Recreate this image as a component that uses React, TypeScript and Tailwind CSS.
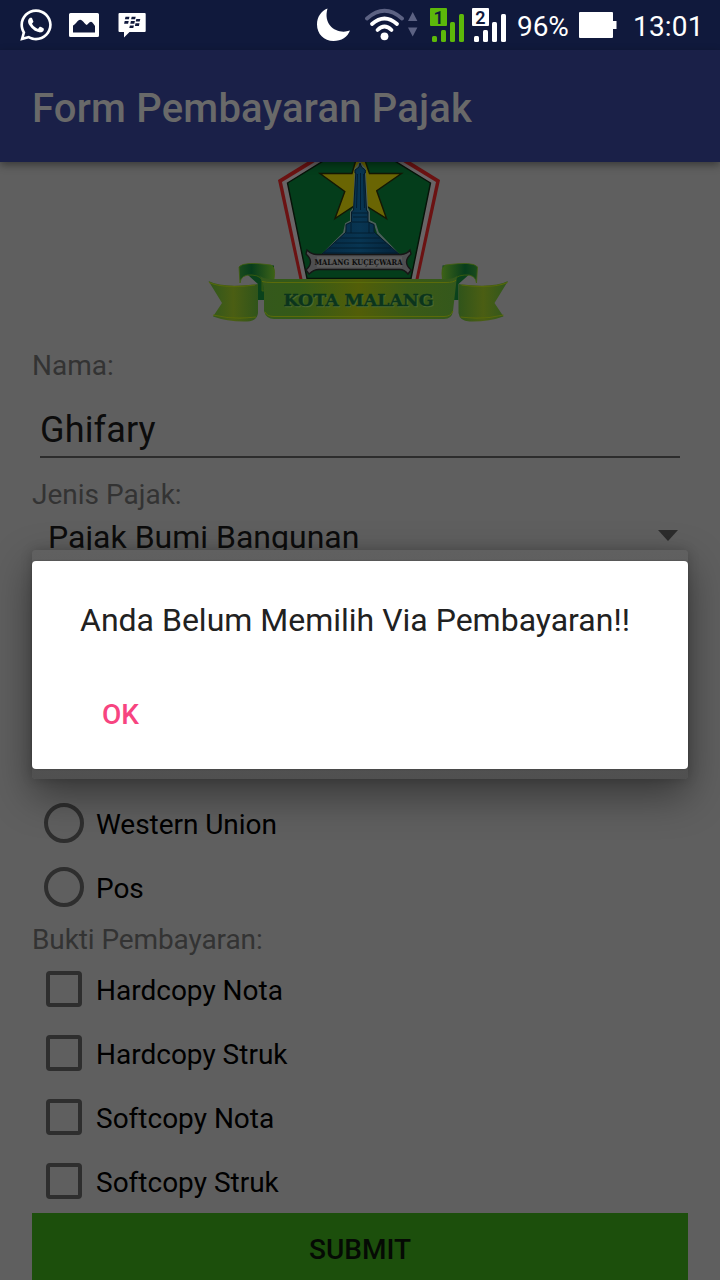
import React from "react";
import { FaWhatsapp } from "react-icons/fa";

function StatusBar() {
  return (
    <div className="flex h-[50px] shrink-0 items-center bg-[#10193c] text-white">
      <FaWhatsapp className="ml-[18px] h-[36px] w-[36px] shrink-0" />
      <svg className="ml-[15px] h-[24px] w-[30px] shrink-0" viewBox="0 0 30 24">
        <path fill="#fff" fillRule="evenodd" d="M1.500 0h27Q30 0 30 1.500v21Q30 24 28.500 24h-27Q0 24 0 22.500v-21Q0 0 1.500 0ZM4 19.500h22V13c-1-1.500-2.500-4-4-4.300-2 .3-3 2.700-4.300 3.200-2-1-4-5-6.500-5.200C8.500 7 7 11 4 12.500Z" />
      </svg>
      <svg className="ml-[19px] h-[26px] w-[28px] shrink-0" viewBox="0 0 28 26">
        <path fill="#fff" d="M1.500 1h25.200q1 0 1 1v17q0 1-1 1H11.500L6 25.500V20H1.500q-1 0-1-1V2q0-1 1-1Z" />
        <path fill="#10193c" d="M7.500 4.700h4l-.6 2.600h-4zM13.700 4.700h4l-.6 2.600h-4zM6.700 9.100h4l-.6 2.600h-4zM12.900 9.100h4l-.6 2.600h-4zM18.300 6.900h4l-.6 2.600h-4zM17.500 11.300h4l-.6 2.600h-4zM11.900 13.500h4l-.6 2.600h-4z" />
      </svg>
      <svg className="ml-[170px] h-[34px] w-[34px] shrink-0" viewBox="0 0 34 34">
        <path fill="#fff" d="M11.500.5C5 3 1 9 1 16.500 1 26 8 33 17.500 33c8 0 14-4 16.500-10.500C22 27 6.500 18 11.500.5Z" />
      </svg>
      <svg className="ml-[14px] h-[34px] w-[54px] shrink-0" viewBox="364 8 54 34" fill="none" strokeLinecap="round">
        <path d="M367 18.500Q384.500 3 402 18.500" stroke="#5c6283" strokeWidth="3.800" />
        <path d="M372 24Q384.500 13 397 24M377.500 30Q384.500 23 391.500 30" stroke="#fff" strokeWidth="3.800" />
        <circle cx="384.500" cy="36.300" r="3.900" fill="#fff" />
        <path d="M408 21l4.700-9 4.700 9zM408 27.500l4.700 9 4.700-9z" fill="#5c6283" />
      </svg>
      <svg className="ml-[12px] h-[36px] w-[77px] shrink-0" viewBox="430 6 77 36">
        <rect x="430" y="7" width="17" height="18" rx="1" fill="#5db80a" />
        <text x="433.500" y="22.700" fontSize="18" fontWeight="600" fill="#10193c">1</text>
        <g fill="#5db80a">
          <rect x="432" y="35" width="5" height="6" rx="1.500" />
          <rect x="441" y="29" width="5" height="12" rx="1.500" />
          <rect x="450" y="21" width="5" height="20" rx="1.500" />
          <rect x="459" y="13" width="5" height="28" rx="1.500" />
        </g>
        <rect x="472" y="7" width="17" height="18" rx="1" fill="#fff" />
        <text x="475.200" y="22.700" fontSize="18" fontWeight="600" fill="#10193c">2</text>
        <g fill="#fff">
          <rect x="474" y="35" width="5" height="6" rx="1.500" />
          <rect x="483" y="29" width="5" height="12" rx="1.500" />
          <rect x="492" y="21" width="5" height="20" rx="1.500" />
          <rect x="501" y="13" width="5" height="28" rx="1.500" />
        </g>
      </svg>
      <span className="ml-[10px] w-[54px] whitespace-nowrap pt-[3px] text-[28px] leading-[33px] tracking-[-0.1px]">96%</span>
      <svg className="ml-[8px] h-[26px] w-[38px] shrink-0" viewBox="0 0 38 26">
        <path fill="#fff" d="M1 0h32q1 0 1 1v8h3.500v8H34v8q0 1-1 1H1q-1 0-1-1V1q0-1 1-1Z" />
      </svg>
      <span className="ml-[16px] whitespace-nowrap pt-[3px] text-[28px] leading-[33px] tracking-[0.2px]">13:01</span>
    </div>
  );
}

function RibbonEnd() {
  return (
    <>
      <path d="M239 267Q242 263 258 264.500L274 265.500V300H258V284Z" fill="#0a421c" />
      <path d="M239 267Q243 261 271 265Q276 267 274 279V291H262V283Q263 276 252 275Q241 274 240 283Z" fill="url(#fold)" stroke="#415f0e" strokeWidth=".8" />
      <path d="M208.500 281Q222 288 255 284.500L258 284V313Q257 321 247 321.500Q228 322 213 316.500L222 303Z" fill="url(#tail)" />
      <path d="M209 282.500Q224 289 255 285M213 315Q234 320 256 317" fill="none" stroke="#57680c" strokeWidth="1.200" />
    </>
  );
}

function CityLogo() {
  return (
    <svg className="h-[168px] w-[320px]" viewBox="200 162 320 168">
      <defs>
        <linearGradient id="band" x1="0" x2="1">
          <stop offset="0" stopColor="#34581c" />
          <stop offset=".2" stopColor="#345a18" />
          <stop offset=".5" stopColor="#525e08" />
          <stop offset=".75" stopColor="#3b5a17" />
          <stop offset="1" stopColor="#34581c" />
        </linearGradient>
        <linearGradient id="tail" x1="0" x2="1">
          <stop offset="0" stopColor="#2f561d" />
          <stop offset=".5" stopColor="#4b5e13" />
          <stop offset="1" stopColor="#30541a" />
        </linearGradient>
        <linearGradient id="fold" x1="0" x2="1">
          <stop offset="0" stopColor="#1b4b1c" />
          <stop offset=".35" stopColor="#073d1c" />
          <stop offset="1" stopColor="#3c6218" />
        </linearGradient>
        <linearGradient id="tower" x1="0" x2="1">
          <stop offset="0" stopColor="#052a43" />
          <stop offset=".5" stopColor="#083552" />
          <stop offset="1" stopColor="#04233a" />
        </linearGradient>
      </defs>

      <path d="M359 130L440 180L417.500 284H300.500L278 180Z" fill="#6b1212" />
      <path d="M359 135L436 182L414.500 284H303.500L282 182Z" fill="#696466" />
      <path d="M359 139L430.500 183L411 278.500H307L287.500 183Z" fill="#043d1b" stroke="#071208" strokeWidth="1.400" />
      <path d="M360 146L369.500 173.500H401.500L376.700 190.800L386.500 218.500L360 202L335 218.500L344.800 191.500L320 173.500H352Z" fill="#6a6503" stroke="#141704" strokeWidth="1.400" />

      <path d="M360 163L355.500 169V174L354 208L351 212V221L346 224L344 233L322 255H399L378 233L375 224L369 221V212L367 208L365 174V169Z" fill="none" stroke="#4c5f5b" strokeWidth="2" />
      <path d="M360 163L361.500 167L365.300 170V173H364.500L366.500 210L368 212V222L374 224.500V232L399 254V258H322V254L346 232V224.500L351.500 222V212L353.500 210L355.800 173H355V170L359 167Z" fill="url(#tower)" stroke="#051a2a" strokeWidth="1" />
      <path d="M360.500 173V210M357.500 174L356.500 208M363.500 174L364.500 208M352 213H368M353 217H367M352 222H368M346 233H374M340 238H380M335 243H386M329 248H391M324 253H397M351 223V233M369 223V233" stroke="#03192a" strokeWidth=".8" />

      <path d="M307 250Q312 255 318 254.500H401Q407 254 410 250L411 254Q402 262 411 270L408 274Q404 269 399 269.500H320Q314 269 309 274L306 270Q315 262 306 254Z" fill="#4e4e50" stroke="#161616" strokeWidth="1.400" />
      <path d="M317 256.500H402V267.500H317Z" fill="#5a5a5a" />
      <text x="314.500" y="265" textLength="88" lengthAdjust="spacingAndGlyphs" fill="#0c0c0c" fontFamily="DejaVu Serif, serif" fontWeight="700" fontSize="7.800">MALANG KUÇEÇWARA</text>

      <RibbonEnd />
      <g transform="translate(716.500 0) scale(-1 1)">
        <RibbonEnd />
      </g>
      <path d="M260 276Q263 279 272 279H446Q454 279 457 276L453 311Q452 319 444 319H274Q266 319 264 311V291Q264 283 260 276Z" fill="url(#band)" />
      <path d="M262 281.500Q266 282.500 272 282.500H446Q454 282.500 456 280M265 312Q267 316.500 274 316.500H444Q451 316.500 453 311" fill="none" stroke="#5b6b0a" strokeWidth="1" />
      <text x="284.500" y="307" textLength="150" lengthAdjust="spacingAndGlyphs" fill="#4c6831" stroke="#4c6831" strokeWidth="0.6" fontFamily="DejaVu Serif, serif" fontWeight="700" fontSize="17.500">KOTA MALANG</text>
      <text x="283.500" y="306" textLength="150" lengthAdjust="spacingAndGlyphs" fill="#0b351c" stroke="#0b351c" strokeWidth="0.4" fontFamily="DejaVu Serif, serif" fontWeight="700" fontSize="17.500">KOTA MALANG</text>
    </svg>
  );
}

function Label({ children }: { children: React.ReactNode }) {
  return <div className="h-[38px] pt-px text-[28px] leading-[38px] text-[#333333]">{children}</div>;
}

function RadioRow({ label }: { label: string }) {
  return (
    <div className="flex h-16 items-center pl-3 text-black">
      <span className="h-10 w-10 rounded-full border-4 border-[#2e2e2e]" />
      <span className="ml-3 pt-[3px] text-[28px] leading-[33px] tracking-[-0.05px]">{label}</span>
    </div>
  );
}

function CheckRow({ label }: { label: string }) {
  return (
    <div className="flex h-16 items-center pl-[14px] text-black">
      <span className="h-9 w-9 rounded-[4px] border-4 border-[#2e2e2e]" />
      <span className="ml-[14px] pt-[3px] text-[28px] leading-[33px]">{label}</span>
    </div>
  );
}

function Dialog() {
  return (
    <div className="absolute left-[32px] top-[550px] w-[656px] rounded-[4px] bg-linear-to-b from-[#606060] to-[#505050] pb-[10px] pt-[11px] shadow-[0_16px_40px_rgba(0,0,0,0.42),0_0_12px_rgba(0,0,0,0.18)]">
      <div className="h-[208px] rounded-[4px] bg-white pl-12 pt-[40px] shadow-[0_0_2px_rgba(0,0,0,0.3)]">
        <p className="whitespace-nowrap text-[32px] leading-[38px] text-[#212121]">Anda Belum Memilih Via Pembayaran!!</p>
        <button className="ml-[22px] mt-[59px] block text-[28px] font-medium leading-[33px] text-[#f74480]">OK</button>
      </div>
    </div>
  );
}

export default function App() {
  return (
    <div className="relative flex h-[1280px] w-[720px] flex-col overflow-hidden bg-[#5f5f5f] font-['Roboto',sans-serif]">
      <StatusBar />
      <header className="z-10 flex h-[112px] shrink-0 items-center bg-[#1a2048] pl-8 pt-1 shadow-[0_3px_8px_rgba(0,0,0,0.4)]">
        <h1 className="text-[40px] font-medium leading-[47px] tracking-[0.2px] text-[#696969]">Form Pembayaran Pajak</h1>
      </header>
      <main className="flex flex-1 flex-col px-8">
        <div className="flex h-[184px] shrink-0 pl-[168px]">
          <CityLogo />
        </div>
        <Label>Nama:</Label>
        <div className="mx-2 mt-[12px] h-[62px] border-b-2 border-[#2c2c2c] pt-[13px] text-[36px] leading-[42px] tracking-[0.15px] text-[#0c0c0c]">Ghifary</div>
        <div className="mt-[17px]">
          <Label>Jenis Pajak:</Label>
        </div>
        <div className="flex h-[48px] items-center justify-between pl-4 pr-[10px] text-[32px] leading-[38px] text-[#0c0c0c]">
          <span>Pajak Bumi Bangunan</span>
          <svg className="mb-[4px] h-[11px] w-[20px]" viewBox="0 0 20 11">
            <path d="M0 0h20L10 11z" fill="#2c2c2c" />
          </svg>
        </div>
        <div className="mt-[230px] shrink-0">
          <RadioRow label="Western Union" />
          <RadioRow label="Pos" />
          <div className="h-[38px] pt-[2px] text-[28px] leading-[38px] tracking-[-0.1px] text-[#333333]">Bukti Pembayaran:</div>
          <CheckRow label="Hardcopy Nota" />
          <CheckRow label="Hardcopy Struk" />
          <CheckRow label="Softcopy Nota" />
          <CheckRow label="Softcopy Struk" />
        </div>
        <button className="h-[67px] shrink-0 bg-[#1c4f0c] pt-[6px] text-[28px] font-medium leading-[33px] text-[#050a04]">SUBMIT</button>
      </main>
      <Dialog />
    </div>
  );
}
